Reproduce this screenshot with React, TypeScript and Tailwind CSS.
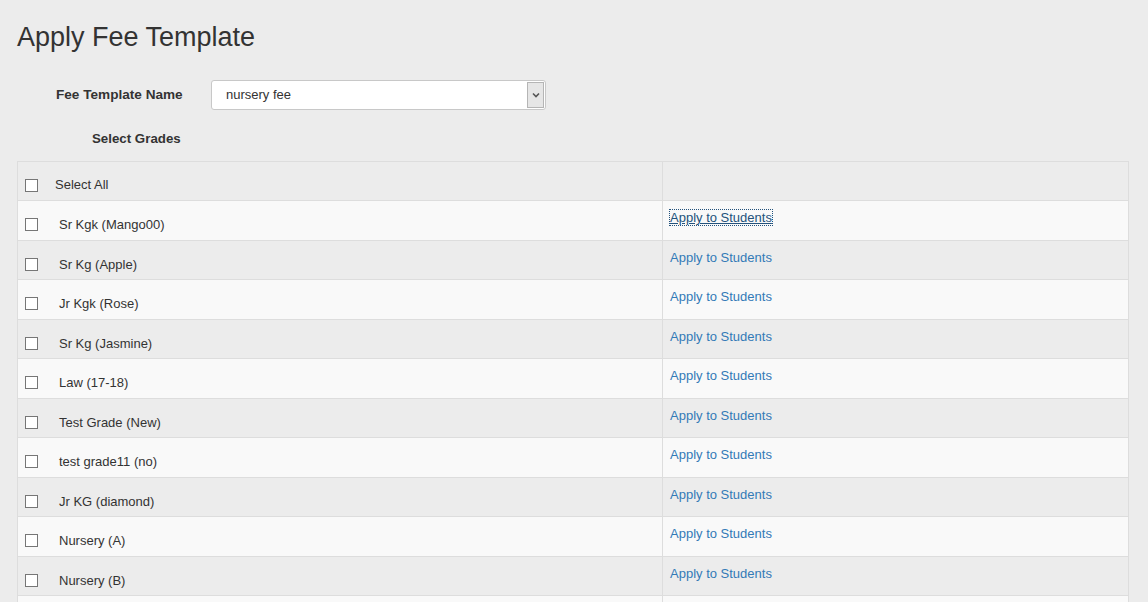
import React from "react";

const grades = [
  "Sr Kgk (Mango00)",
  "Sr Kg (Apple)",
  "Jr Kgk (Rose)",
  "Sr Kg (Jasmine)",
  "Law (17-18)",
  "Test Grade (New)",
  "test grade11 (no)",
  "Jr KG (diamond)",
  "Nursery (A)",
  "Nursery (B)",
];

function Box() {
  return <span className="inline-block w-[13px] h-[13px] shrink-0 border border-[#767676] bg-white" />;
}

export default function App() {
  return (
    <div
      className="h-[602px] bg-[#ececec] text-[#333] pl-[17px] overflow-hidden"
      style={{ fontFamily: '"Liberation Sans", Arial, sans-serif' }}
    >
      <h1 className="pt-[22px] text-[27px] leading-[30px] font-normal text-[#333]">Apply Fee Template</h1>

      <div className="mt-[28px] flex items-center h-[30px]">
        <div className="w-[194px] pl-[39px] text-[13.6px] font-bold">Fee Template Name</div>
        <div className="relative w-[335px] h-[30px] bg-white border border-[#c8c8c8] rounded-[3px] flex items-center">
          <span className="pl-[14px] text-[13px]">nursery fee</span>
          <div className="absolute right-[1px] top-[1px] bottom-[1px] w-[17px] bg-[#e6e6e6] border border-[#b5b5b5] flex items-center justify-center">
            <svg width="8" height="6" viewBox="0 0 8 6">
              <path d="M1 1.5 L4 4.5 L7 1.5" fill="none" stroke="#555" strokeWidth="1.6" />
            </svg>
          </div>
        </div>
      </div>

      <div className="mt-[19px] pl-[75px] text-[13.3px] font-bold leading-[20px]">Select Grades</div>

      <div className="mt-[12px] w-[1112px] border-x border-t border-[#dddddd] text-[13px]">
        <div className="flex h-[38px]">
          <div className="w-[644px] flex items-start pt-[17px] pl-[7px]">
            <Box />
            <span className="ml-[17px] leading-[13px] -mt-[1px]">Select All</span>
          </div>
          <div className="flex-1 border-l border-[#dddddd]" />
        </div>
        {grades.map((g, i) => (
          <div
            key={i}
            className={`flex h-[39.5px] border-t border-[#dddddd] ${i % 2 === 0 ? "bg-[#f9f9f9]" : "bg-[#ececec]"}`}
          >
            <div className="w-[644px] flex items-start pt-[17px] pl-[7px]">
              <Box />
              <span className="ml-[21px] leading-[13px]">{g}</span>
            </div>
            <div className="flex-1 border-l border-[#dddddd] pl-[7px] pt-[7px] leading-[20px]">
              {i === 0 ? (
                <a className="text-[#23527c] underline outline-dotted outline-1 outline-[#23527c]">Apply to Students</a>
              ) : (
                <a className="text-[#337ab7]">Apply to Students</a>
              )}
            </div>
          </div>
        ))}
        <div className="flex h-[39.5px] border-t border-[#dddddd] bg-[#f9f9f9]">
          <div className="w-[644px]" />
          <div className="flex-1 border-l border-[#dddddd]" />
        </div>
      </div>
    </div>
  );
}
